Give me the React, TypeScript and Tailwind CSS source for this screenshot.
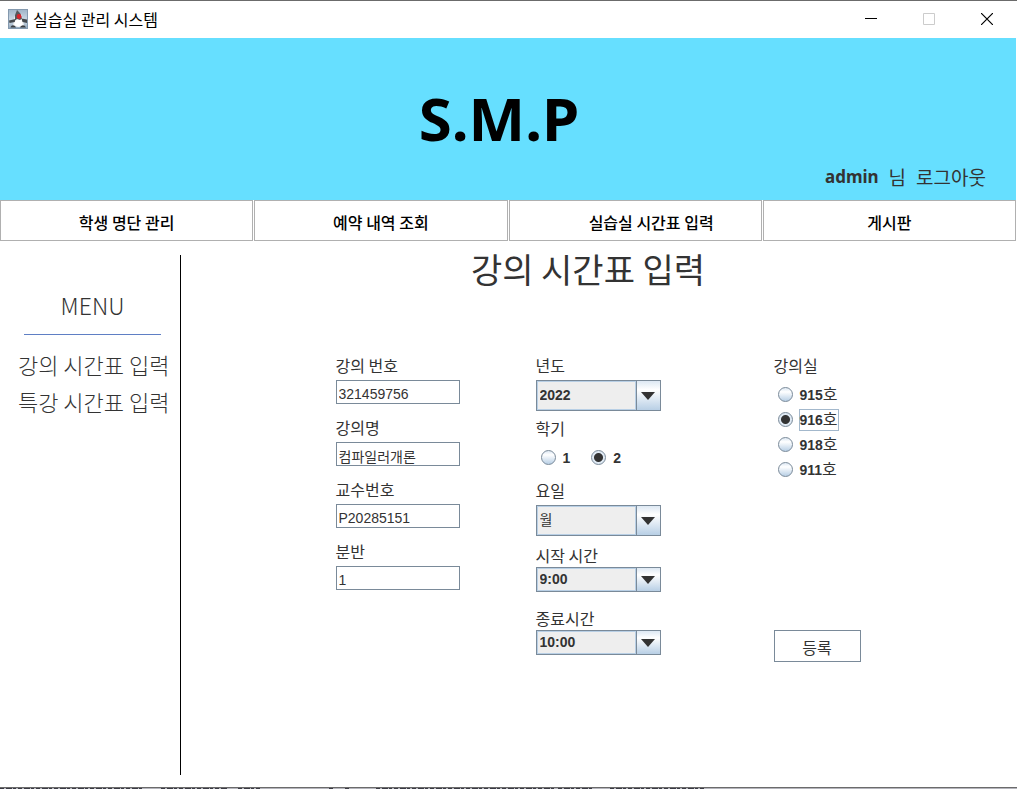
import type { ReactNode } from "react";

const KR = "font-['Noto_Sans_CJK_KR',sans-serif]";
const UI = "font-['Liberation_Sans','Noto_Sans_CJK_KR',sans-serif]";
const LABEL = "block h-5 text-[16px] leading-5 text-[#333333] font-['Noto_Sans_CJK_KR',sans-serif]";

function AppIcon() {
  return (
    <svg width="20" height="20" viewBox="0 0 20 20" aria-hidden="true">
      <defs>
        <linearGradient id="icon-bg" x1="0" y1="0" x2="0" y2="1">
          <stop offset="0" stopColor="#9fb4c8" />
          <stop offset="0.6" stopColor="#cfdbe6" />
          <stop offset="1" stopColor="#8fa5ba" />
        </linearGradient>
      </defs>
      <rect x="0.5" y="0.5" width="19" height="19" fill="url(#icon-bg)" stroke="#8499ae" />
      <path d="M9 2 6.500 8 5 17l5 1 6-.5-1-7L13 5z" fill="#f4f4f4" />
      <path d="M9 1 12.500 4.500l1.500 5-2 1.500-3-1-2 1.500L7 6z" fill="#55585c" />
      <path d="M7.500 10 1 11.500l.5 2.500 5.500-1zM13.500 9.500l5.500 1v3.500l-4.500-1z" fill="#45494d" />
      <path d="M2.500 18.500c1-3 4-3 5.500 0zM12 18.500c1.500-3 4.500-3 6 0z" fill="#3b3f43" />
      <path d="M7 11.500l6.500-.5 1 5-4 1.500-4-1.500z" fill="#ffffff" />
      <circle cx="11" cy="7.500" r="2.400" fill="#d8232c" />
    </svg>
  );
}

function TextField({ id, label, value }: { id: string; label: string; value: string }) {
  return (
    <div>
      <label htmlFor={id} className={LABEL}>{label}</label>
      <input
        id={id}
        type="text"
        defaultValue={value}
        className={`mt-[5px] block h-6 w-full border border-[#7a8a99] bg-white px-[2px] pt-[3px] text-[14px] text-[#333333] outline-none ${UI}`}
      />
    </div>
  );
}

type ComboProps = { id: string; label: string; options: string[]; compact?: boolean; hangul?: boolean };

function ComboBox({ id, label, options, compact, hangul }: ComboProps) {
  return (
    <div>
      <label htmlFor={id} className={LABEL}>{label}</label>
      <div className={`relative flex border border-[#7a8a99] ${compact ? "mt-[2px] h-[25px]" : "mt-[5px] h-[31px]"}`}>
        <select
          id={id}
          className={`min-w-0 flex-1 appearance-none border border-[#b8cfe5] bg-[#eeeeee] pl-[2px] text-[14px] text-[#333333] outline-none ${hangul ? "font-normal" : "font-bold"} ${UI}`}
        >
          {options.map((o) => (
            <option key={o}>{o}</option>
          ))}
        </select>
        <span className="pointer-events-none flex w-6 items-center justify-center border-l border-[#7a8a99] bg-linear-to-b from-[#dde8f3] via-white via-30% to-[#b8cfe5]">
          <svg width="14" height="8" viewBox="0 0 14 8" aria-hidden="true">
            <path d="M0 0h14L7 8z" fill="#333333" />
          </svg>
        </span>
      </div>
    </div>
  );
}

function Radio({ name, children, checked, framed }: { name: string; children: ReactNode; checked?: boolean; framed?: boolean }) {
  return (
    <label className="flex h-[25px] items-center gap-[6px]">
      <input
        type="radio"
        name={name}
        defaultChecked={checked}
        className="size-[15px] shrink-0 appearance-none rounded-full border border-[#7a8a99] bg-linear-to-b from-[#dde8f3] via-white via-30% to-[#b8cfe5] outline-none checked:bg-[radial-gradient(circle,#333333_0_4px,#dfe9f3_5px)]"
      />
      <span className={`border text-[14px] leading-5 font-bold text-[#333333] ${UI} ${framed ? "border-[#a3b8cc]" : "border-transparent"}`}>
        {children}
      </span>
    </label>
  );
}

function Room({ no }: { no: string }) {
  return (
    <>
      {no}
      <span className="text-[16px] leading-4 font-normal">호</span>
    </>
  );
}

const TABS = [
  { text: "학생 명단 관리", pad: "px-2" },
  { text: "예약 내역 조회", pad: "px-2" },
  { text: "실습실 시간표 입력", pad: "pl-8" },
  { text: "게시판", pad: "px-2" },
];

export default function App() {
  return (
    <div className="flex min-h-screen flex-col border-t border-[#6b6b6b] bg-white">
      <header className="flex h-[37px] items-center pb-[2px]">
        <div className="flex flex-1 items-center gap-[5px] pl-2">
          <AppIcon />
          <h1 className={`text-[16px] leading-6 text-black ${KR}`}>실습실 관리 시스템</h1>
        </div>
        <div className="flex items-center gap-[46px] pr-6">
          <button type="button" aria-label="최소화">
            <svg width="12" height="12" viewBox="0 0 12 12"><path d="M0 5.500h12" stroke="#000" /></svg>
          </button>
          <button type="button" aria-label="최대화" disabled>
            <svg width="12" height="12" viewBox="0 0 12 12"><path d="M.5.5h11v11H.5z" fill="none" stroke="#cccccc" /></svg>
          </button>
          <button type="button" aria-label="닫기">
            <svg width="12" height="12" viewBox="0 0 12 12"><path d="M0 0l12 12M12 0L0 12" stroke="#000" strokeWidth="1.200" /></svg>
          </button>
        </div>
      </header>

      <section className="mr-px flex h-[162px] flex-col bg-[#66dfff]">
        <p className="pt-10 pr-[18px] text-center font-['Noto_Sans',sans-serif] text-[60px] leading-[80px] font-bold text-black">S.M.P</p>
        <div className="mt-[7px] flex items-center justify-end gap-[10px] pr-[30px] text-[#333333]">
          <span className="font-['Noto_Sans',sans-serif] text-[17px] leading-6 font-bold">admin</span>
          <span className={`text-[19px] leading-6 ${KR}`}>님</span>
          <a href="#logout" className={`text-[19px] leading-6 ${KR}`}>로그아웃</a>
        </div>
      </section>

      <nav className="mr-px grid h-[41px] grid-cols-4 gap-px">
        {TABS.map((t) => (
          <button key={t.text} type="button" className={`border border-[#b0b0b0] bg-white pt-[2px] text-[16px] font-medium text-black ${t.pad} ${KR}`}>
            {t.text}
          </button>
        ))}
      </nav>

      <div className="flex flex-1 pb-3">
        <aside className="mt-[14px] flex w-[181px] shrink-0 flex-col border-r border-black">
          <h2 className={`mr-[19px] ml-6 border-b border-[#5f7fc4] pt-[34px] pb-[12px] text-center text-[23px] leading-[33px] font-light text-[#333333] ${KR}`}>MENU</h2>
          <ul className={`mt-[11px] pl-[18px] text-[22px] leading-[37px] font-light whitespace-nowrap text-[#333333] ${KR}`}>
            <li><a href="#lecture">강의 시간표 입력</a></li>
            <li><a href="#special">특강 시간표 입력</a></li>
          </ul>
        </aside>

        <main className="min-w-0 flex-1">
          <h2 className={`pt-2 pr-[22px] text-center text-[34px] leading-10 text-[#333333] ${KR}`}>강의 시간표 입력</h2>
          <form className="mt-[66px] grid grid-cols-[200px_238px_87px] justify-center pr-[2px]" onSubmit={(e) => e.preventDefault()}>
            <div className="flex w-[124px] flex-col gap-[13px]">
              <TextField id="lecture-no" label="강의 번호" value="321459756" />
              <TextField id="lecture-name" label="강의명" value="컴파일러개론" />
              <TextField id="professor-no" label="교수번호" value="P20285151" />
              <TextField id="division" label="분반" value="1" />
            </div>

            <div className="flex w-[125px] flex-col gap-[7px]">
              <ComboBox id="year" label="년도" options={["2022", "2023"]} />
              <fieldset>
                <legend className={LABEL}>학기</legend>
                <div className="flex gap-5 pt-[7px] pb-[3px] pl-[5px]">
                  <Radio name="semester">1</Radio>
                  <Radio name="semester" checked>2</Radio>
                </div>
              </fieldset>
              <ComboBox id="day" label="요일" options={["월", "화", "수", "목", "금"]} hangul />
              <div className="flex flex-col gap-4 pt-[2px]">
                <ComboBox id="start" label="시작 시간" options={["9:00", "10:00"]} compact />
                <ComboBox id="end" label="종료시간" options={["10:00", "11:00"]} compact />
              </div>
            </div>

            <div>
              <fieldset>
                <legend className={LABEL}>강의실</legend>
                <div className="pt-[7px] pl-1">
                  <Radio name="room"><Room no="915" /></Radio>
                  <Radio name="room" checked framed><Room no="916" /></Radio>
                  <Radio name="room"><Room no="918" /></Radio>
                  <Radio name="room"><Room no="911" /></Radio>
                </div>
              </fieldset>
              <button type="submit" className={`mt-[148px] h-8 w-full border border-[#7a8a99] bg-white pt-[2px] text-[16px] text-[#333333] ${KR}`}>
                등록
              </button>
            </div>
          </form>
        </main>
      </div>
      <footer className="h-[2px] border-t border-[#6b6b6b] bg-[#b4b4bc]">
        <svg width="720" height="1" viewBox="0 0 720 1" className="block" aria-hidden="true">
          <path d="M0 .5h144M161 .5h66M238 .5h22M329 .5h5M345 .5h6M376 .5h179M558 .5h36M610 .5h95" stroke="#3a3a44" strokeDasharray="4 2 6 1 3 2" />
        </svg>
      </footer>
    </div>
  );
}
